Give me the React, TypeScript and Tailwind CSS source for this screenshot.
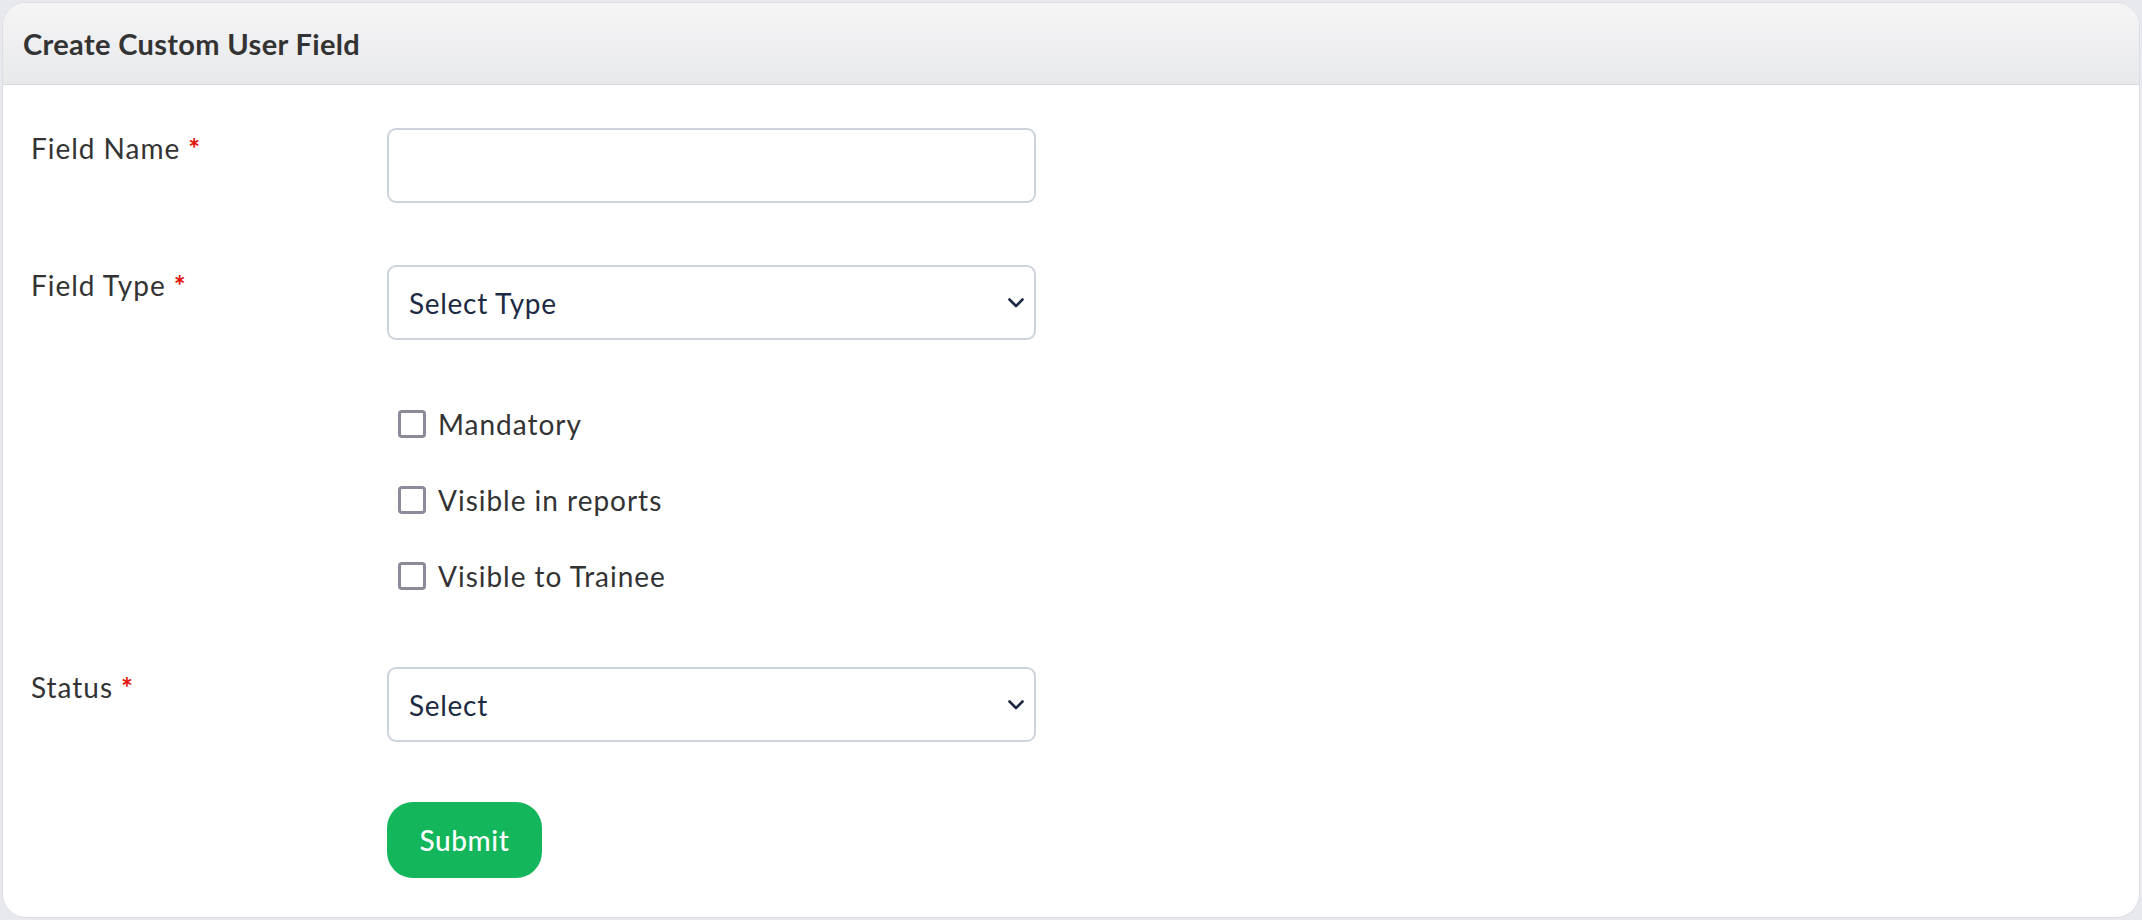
import { useState } from 'react';

const checks = ['Mandatory', 'Visible in reports', 'Visible to Trainee'];

function Label({ text }: { text: string }) {
  return (
    <label className="block text-[28px] leading-[40px] tracking-[0.035em] text-[#333333]">
      {text}
      <span className="ml-[8px] font-bold text-[#e3120b]">*</span>
    </label>
  );
}

function SelectBox({ placeholder }: { placeholder: string }) {
  return (
    <div className="relative w-[649px]">
      <select
        defaultValue=""
        className="h-[75px] w-full appearance-none rounded-[9px] border-2 border-[#cdd3dc] bg-white pl-[20px] pr-[48px] text-[28px] tracking-[0.025em] text-[#1d2a44] outline-none"
      >
        <option value="">{placeholder}</option>
      </select>
      <svg
        className="pointer-events-none absolute right-[12px] top-1/2 -translate-y-1/2"
        width="16"
        height="10"
        viewBox="0 0 16 10"
        fill="none"
      >
        <path d="M1.5 1.5 L8 8 L14.5 1.5" stroke="#1d2a44" strokeWidth="2.6" strokeLinecap="round" strokeLinejoin="round" />
      </svg>
    </div>
  );
}

export default function App() {
  const [name, setName] = useState('');

  return (
    <div className="min-h-screen bg-[#e8e9ee] p-[2px]" style={{ fontFamily: 'Lato, "Open Sans", sans-serif' }}>
      <div className="h-[916px] overflow-hidden rounded-[24px] border border-[#dddee4] bg-white">
        {/* Header */}
        <div className="flex h-[82px] items-center border-b border-[#d8d9dd] bg-gradient-to-b from-[#f5f5f6] to-[#e8e9eb] px-[20px]">
          <h1 className="text-[29px] font-bold tracking-[0.012em] text-[#333333]">Create Custom User Field</h1>
        </div>

        {/* Form */}
        <div className="pl-[28px] pt-[43px]">
          <div className="flex">
            <div className="w-[356px]">
              <Label text="Field Name" />
            </div>
            <input
              value={name}
              onChange={(e) => setName(e.target.value)}
              className="h-[75px] w-[649px] rounded-[9px] border-2 border-[#cdd3dc] bg-white px-[20px] text-[28px] text-[#1d2a44] outline-none"
            />
          </div>

          <div className="mt-[62px] flex">
            <div className="w-[356px]">
              <Label text="Field Type" />
            </div>
            <SelectBox placeholder="Select Type" />
          </div>

          <div className="ml-[367px] mt-[64px] flex flex-col gap-[36px]">
            {checks.map((c) => (
              <label key={c} className="flex h-[40px] items-center gap-[12px]">
                <input
                  type="checkbox"
                  className="h-[28px] w-[28px] appearance-none rounded-[4px] border-[3px] border-[#8c8b9a] bg-white"
                />
                <span className="text-[28px] tracking-[0.035em] text-[#333333]">{c}</span>
              </label>
            ))}
          </div>

          <div className="mt-[71px] flex">
            <div className="w-[356px]">
              <Label text="Status" />
            </div>
            <SelectBox placeholder="Select" />
          </div>

          <button className="ml-[356px] mt-[60px] h-[76px] w-[155px] rounded-[26px] bg-[#13b65a] text-[28px] font-medium tracking-[0.02em] text-white">
            Submit
          </button>
        </div>
      </div>
    </div>
  );
}
